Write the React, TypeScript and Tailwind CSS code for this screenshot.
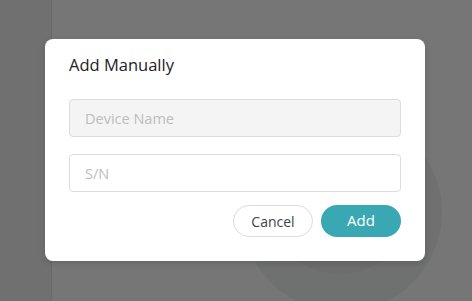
import React from "react";

export default function App() {
  return (
    <div
      className="relative w-[472px] h-[301px] overflow-hidden bg-[#767676] flex items-center justify-center pr-[2px] pb-[2px]"
      style={{ fontFamily: '"Open Sans", "Noto Sans", sans-serif' }}
    >
      <div className="absolute left-0 top-0 w-[52px] h-full bg-[#707070] border-r border-[#6a6a6a]" />
      <div className="absolute left-[242px] top-[112px] w-[200px] h-[200px] rounded-full bg-[#6f7171]" />
      <div className="absolute left-[266px] top-[126px] w-[148px] h-[148px] rounded-full bg-[#6c6e6e]" />

      <div className="relative w-[380px] h-[222px] rounded-[8px] bg-white shadow-[0_2px_6px_rgba(0,0,0,0.15)] px-6 pt-[14px] flex flex-col">
        <div className="text-[16.5px] leading-[24px] text-[#222]">Add Manually</div>
        <div className="mt-[22px] h-[38px] rounded-[4px] border border-[#dcdcdc] bg-[#f4f4f4] flex items-center pl-[15px] pt-[2px] text-[14.5px] text-[#bdbdbd]">
          Device Name
        </div>
        <div className="mt-[17px] h-[38px] rounded-[4px] border border-[#dcdcdc] bg-white flex items-center pl-[15px] pt-[2px] text-[14.5px] text-[#bdbdbd]">
          S/N
        </div>
        <div className="mt-[13px] flex justify-end gap-2">
          <div className="w-[80px] h-[32px] rounded-full border border-[#dcdcdc] bg-white flex items-center justify-center pt-[1px] text-[14px] text-[#444]">
            Cancel
          </div>
          <div className="w-[80px] h-[32px] rounded-full bg-[#39a8b3] flex items-center justify-center text-[15px] text-white">
            Add
          </div>
        </div>
      </div>
    </div>
  );
}
